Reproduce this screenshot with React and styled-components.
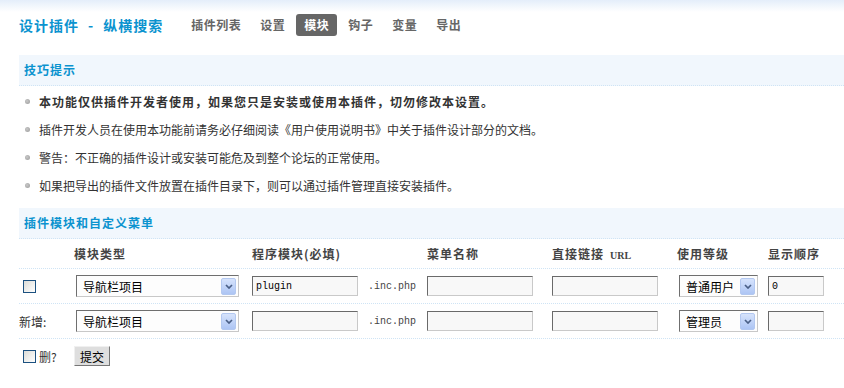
import styled, { createGlobalStyle } from "styled-components";

const GlobalStyle = createGlobalStyle`
  html, body { margin: 0; padding: 0; }
  body {
    width: 844px;
    height: 388px;
    overflow: hidden;
    background: #fff linear-gradient(to bottom, #e4eefa 0, #ffffff 12px) repeat-x;
    font: 12px "Noto Sans CJK SC", "Liberation Sans", sans-serif;
    color: #333;
  }
`;

const Page = styled.div`
  padding: 14px 0 0 19px;
`;

const TitleBar = styled.div`
  display: flex;
  align-items: center;
  height: 22px;
`;

const Title = styled.h3`
  display: flex;
  margin: 0 20px 0 0;
  font-size: 14px;
  font-weight: bold;
  letter-spacing: 1px;
  line-height: 22px;
  color: #0b93cf;
  white-space: nowrap;
`;

const Dash = styled.span`
  margin: 0 9px 0 9px;
`;

const Nav = styled.ul`
  display: flex;
  gap: 3px;
  margin: 0;
  padding: 0;
  list-style: none;
`;

const NavItem = styled.li`
  padding: 0 8px;
  line-height: 22px;
  font-weight: bold;
  letter-spacing: 0.5px;
  border-radius: 3px;
  color: ${({ $active }) => ($active ? "#fff" : "#666")};
  background: ${({ $active }) => ($active ? "#666" : "transparent")};
`;

const Partition = styled.div`
  margin-top: ${({ $top }) => $top}px;
  height: 30px;
  line-height: 30px;
  padding-left: 5px;
  background: #f1f7fd;
  border-bottom: 1px dotted #cfe4f5;
  color: #0b93cf;
  font-weight: bold;
  letter-spacing: 1px;
`;

const Tips = styled.ul`
  margin: 0;
  padding: 1px 0 1px;
  list-style: none;
`;

const Tip = styled.li`
  display: flex;
  align-items: center;
  height: 28px;
  font-weight: ${({ $strong }) => ($strong ? "bold" : "normal")};
  letter-spacing: ${({ $strong }) => ($strong ? "1px" : "0")};
  color: #333;
  &::before {
    content: "";
    width: 5px;
    height: 5px;
    margin: 0 9px 0 6px;
    border-radius: 50%;
    background: radial-gradient(circle at 40% 40%, #c8c8c8, #9a9a9a);
  }
`;

const Row = styled.div`
  display: grid;
  grid-template-columns: 55px 178px 116px 59px 125px 125px 91px 1fr;
  align-items: center;
  height: ${({ $h }) => $h}px;
  border-bottom: ${({ $last }) => ($last ? "none" : "1px dotted #cfe4f5")};
`;

const Th = styled.div`
  font-weight: bold;
  letter-spacing: 1px;
  color: #444;
  white-space: nowrap;
`;

const Latin = styled.span`
  font: bold 10px "Liberation Serif", serif;
  letter-spacing: 0;
  margin-left: 6px;
`;

const Cell = styled.div`
  display: flex;
  align-items: center;
  color: #333;
  white-space: nowrap;
`;

const Suffix = styled.span`
  font: 10px "Liberation Mono", monospace;
  color: #444;
`;

const Check = styled.input.attrs({ type: "checkbox" })`
  appearance: none;
  margin: 0 3px 0 4px;
  width: 13px;
  height: 13px;
  box-sizing: border-box;
  border: 1px solid #1c5180;
  background: linear-gradient(135deg, #dcdcd7, #ffffff);
`;

const TextInput = styled.input.attrs({ type: "text" })`
  box-sizing: border-box;
  width: ${({ $w }) => $w}px;
  height: 20px;
  margin: 0;
  padding: 0 3px;
  border: 1px solid;
  border-color: #6a6a6a #c9c9c9 #c9c9c9 #6a6a6a;
  background: #f8f8f8;
  font: 10px "Liberation Mono", monospace;
  color: #000;
  outline: none;
`;

const SelectBox = styled.div`
  display: flex;
  align-items: center;
  justify-content: space-between;
  box-sizing: border-box;
  width: ${({ $w }) => $w}px;
  height: 22px;
  margin-left: 2px;
  padding: 0 2px 0 6px;
  border: 1px solid;
  border-color: #6f6f6f #c8c8c8 #c8c8c8 #6f6f6f;
  background: #fdfdfd;
  color: #000;
`;

const Arrow = styled.span`
  display: flex;
  align-items: center;
  justify-content: center;
  width: 15px;
  height: 17px;
  box-sizing: border-box;
  border: 1px solid #b3c8f0;
  border-radius: 2px;
  background: linear-gradient(to bottom, #d6e3fc, #adc5f4);
`;

const Button = styled.button`
  box-sizing: border-box;
  width: 36px;
  height: 20px;
  margin: 0;
  padding: 0;
  border: 1px solid;
  border-color: #f0f0f0 #767676 #767676 #f0f0f0;
  background: #dedede;
  font: 12px "Noto Sans CJK SC", sans-serif;
  color: #000;
`;

function Select({ w, value }) {
  return (
    <SelectBox $w={w}>
      <span>{value}</span>
      <Arrow>
        <svg width="8" height="5" viewBox="0 0 8 5">
          <path d="M1 1 L4 4 L7 1" fill="none" stroke="#4a5f86" strokeWidth="1.7" />
        </svg>
      </Arrow>
    </SelectBox>
  );
}

const navItems = ["插件列表", "设置", "模块", "钩子", "变量", "导出"];

const tips = [
  { text: "本功能仅供插件开发者使用，如果您只是安装或使用本插件，切勿修改本设置。", strong: true },
  { text: "插件开发人员在使用本功能前请务必仔细阅读《用户使用说明书》中关于插件设计部分的文档。" },
  { text: "警告：不正确的插件设计或安装可能危及到整个论坛的正常使用。" },
  { text: "如果把导出的插件文件放置在插件目录下，则可以通过插件管理直接安装插件。" },
];

export default function App() {
  return (
    <>
      <GlobalStyle />
      <Page>
        <TitleBar>
          <Title>设计插件<Dash>-</Dash>纵横搜索</Title>
          <Nav>
            {navItems.map((n) => (
              <NavItem key={n} $active={n === "模块"}>{n}</NavItem>
            ))}
          </Nav>
        </TitleBar>

        <Partition $top={19}>技巧提示</Partition>
        <Tips>
          {tips.map((t) => (
            <Tip key={t.text} $strong={t.strong}>{t.text}</Tip>
          ))}
        </Tips>

        <Partition $top={8}>插件模块和自定义菜单</Partition>
        <Row $h={29}>
          <Th />
          <Th>模块类型</Th>
          <Th>程序模块(必填)</Th>
          <Th />
          <Th>菜单名称</Th>
          <Th>直接链接<Latin>URL</Latin></Th>
          <Th>使用等级</Th>
          <Th>显示顺序</Th>
        </Row>
        <Row $h={34}>
          <Cell><Check /></Cell>
          <Cell><Select w={163} value="导航栏项目" /></Cell>
          <Cell><TextInput $w={106} defaultValue="plugin" /></Cell>
          <Cell><Suffix>.inc.php</Suffix></Cell>
          <Cell><TextInput $w={106} /></Cell>
          <Cell><TextInput $w={106} /></Cell>
          <Cell><Select w={79} value="普通用户" /></Cell>
          <Cell><TextInput $w={56} defaultValue="0" /></Cell>
        </Row>
        <Row $h={34}>
          <Cell>新增:</Cell>
          <Cell><Select w={163} value="导航栏项目" /></Cell>
          <Cell><TextInput $w={106} /></Cell>
          <Cell><Suffix>.inc.php</Suffix></Cell>
          <Cell><TextInput $w={106} /></Cell>
          <Cell><TextInput $w={106} /></Cell>
          <Cell><Select w={79} value="管理员" /></Cell>
          <Cell><TextInput $w={56} /></Cell>
        </Row>
        <Row $h={34} $last>
          <Cell><Check />删?</Cell>
          <Cell><Button>提交</Button></Cell>
        </Row>
      </Page>
    </>
  );
}
